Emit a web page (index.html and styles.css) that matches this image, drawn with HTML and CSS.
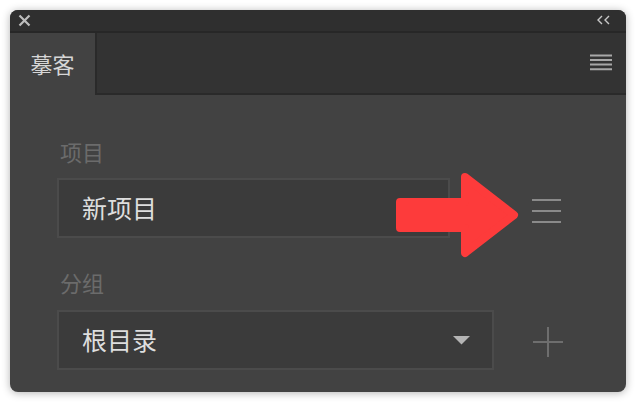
FILE: index.html
```html
<!DOCTYPE html>
<html lang="zh-CN">
<head>
  <meta charset="UTF-8">
  <title>摹客</title>
  <link rel="stylesheet" href="styles.css">
</head>
<body>
  <div class="window">
    <div class="titlebar">
      <svg class="close" width="13" height="13" viewBox="0 0 13 13">
        <path d="M1.5 1.5 L11.5 11.5 M11.5 1.5 L1.5 11.5" stroke="#bdbdbd" stroke-width="2.2" fill="none"/>
      </svg>
      <svg class="collapse" width="16" height="10" viewBox="0 0 16 10">
        <path d="M6 1 L2 5 L6 9 M13 1 L9 5 L13 9" stroke="#c8c8c8" stroke-width="1.4" fill="none"/>
      </svg>
    </div>

    <div class="tabbar">
      <div class="tab">摹客</div>
      <div class="tab-rest">
        <svg class="panel-menu" width="22" height="17" viewBox="0 0 22 17">
          <path d="M0 1.5 H22 M0 6 H22 M0 10.6 H22 M0 15.2 H22" stroke="#a8a8a8" stroke-width="2" fill="none"/>
        </svg>
      </div>
    </div>

    <div class="content">
      <div class="label">项目</div>
      <div class="row">
        <div class="field field-project">新项目</div>
        <svg class="row-icon list-icon" width="29" height="24" viewBox="0 0 29 24">
          <path d="M0 1 H29 M0 12 H29 M0 23 H29" stroke="#8a8a8a" stroke-width="2" fill="none"/>
        </svg>
      </div>

      <div class="label label-group">分组</div>
      <div class="row">
        <div class="field field-select">
          <span>根目录</span>
          <svg class="caret" width="19" height="10" viewBox="0 0 19 10">
            <path d="M1 1 H18 L9.5 9.5 Z" fill="#b4b4b4"/>
          </svg>
        </div>
        <svg class="row-icon plus-icon" width="30" height="30" viewBox="0 0 30 30">
          <path d="M15 0 V30 M0 15 H30" stroke="#6e6e6e" stroke-width="2" fill="none"/>
        </svg>
      </div>
    </div>

    <svg class="arrow" width="132" height="94" viewBox="0 0 132 94">
      <path d="M10 34 H75 V9 L124 47 L75 85 V60 H10 Z" fill="#fd3b3b" stroke="#fd3b3b" stroke-width="8" stroke-linejoin="round"/>
    </svg>
  </div>
</body>
</html>
```

FILE: styles.css
```css
* {
  margin: 0; padding: 0;
  box-sizing: border-box;
  font-family: 'Noto Sans CJK SC', 'Noto Sans', sans-serif;
}
body { background: #ffffff; padding: 10px; }
.window {
  width: 616px; height: 382px;
  background: #424242; border-radius: 8px;
  box-shadow: 0 1px 8px rgba(0,0,0,0.3);
  overflow: hidden; position: relative;
}
.titlebar {
  height: 23px; background: #2f2f2f;
  border-bottom: 2px solid #272727;
  display: flex; justify-content: space-between; align-items: center;
  padding: 0 14px 0 8px;
}
.close { margin-top: 0; }
.collapse { margin-top: -2px; }
.tabbar { height: 62px; display: flex; }
.tab {
  width: 85px; background: #424242;
  color: #d6d6d6; font-size: 22px;
  display: flex; align-items: center; justify-content: center;
  padding-bottom: 2px;
}
.tab-rest {
  flex: 1; background: #333333;
  border-left: 2px solid #2a2a2a; border-bottom: 2px solid #2a2a2a;
  display: flex; justify-content: flex-end; align-items: center;
  padding-right: 14px; padding-bottom: 2px;
}
.content { padding: 45px 0 0 47px; }
.label {
  color: #6b6b6b; font-size: 22px; line-height: 23px;
  margin-left: 3px; margin-bottom: 15px;
}
.label-group { margin-top: 33px; margin-bottom: 16px; }
.row { display: flex; align-items: center; }
.field {
  height: 60px; background: #3b3b3b;
  border: 2px solid #4b4b4b;
  color: #dedede; font-size: 25px;
  display: flex; align-items: center;
  padding: 0 0 2px 23px;
}
.field-project { width: 393px; }
.field-select { width: 437px; justify-content: space-between; padding-right: 21px; }
.caret { margin-top: 2px; }
.list-icon { margin-left: 82px; margin-top: 5px; }
.plus-icon { margin-left: 39px; margin-top: 3px; }
.arrow { position: absolute; left: 380px; top: 158px; }
```
